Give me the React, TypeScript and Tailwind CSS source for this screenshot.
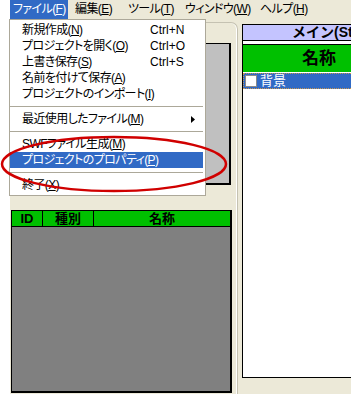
import React from 'react';

type Item =
  | { kind: 'item'; label: string; mn: string; shortcut?: string; sub?: boolean; active?: boolean }
  | { kind: 'sep' };

const fileMenu: Item[] = [
  { kind: 'item', label: '新規作成', mn: 'N', shortcut: 'Ctrl+N' },
  { kind: 'item', label: 'プロジェクトを開く', mn: 'O', shortcut: 'Ctrl+O' },
  { kind: 'item', label: '上書き保存', mn: 'S', shortcut: 'Ctrl+S' },
  { kind: 'item', label: '名前を付けて保存', mn: 'A' },
  { kind: 'item', label: 'プロジェクトのインポート', mn: 'I' },
  { kind: 'sep' },
  { kind: 'item', label: '最近使用したファイル', mn: 'M', sub: true },
  { kind: 'sep' },
  { kind: 'item', label: 'SWFファイル生成', mn: 'M' },
  { kind: 'item', label: 'プロジェクトのプロパティ', mn: 'P', active: true },
  { kind: 'sep' },
  { kind: 'item', label: '終了', mn: 'X' },
];

const Mn = ({ label, mn }: { label: string; mn: string }) => (
  <span className="whitespace-nowrap tracking-[-0.6px]">
    {label}(<span className="underline underline-offset-1">{mn}</span>)
  </span>
);

const menuBar = [
  { label: 'ファイル', mn: 'F', w: 'w-[58px]', open: true },
  { label: '編集', mn: 'E', w: 'w-[53px] ml-[4px]' },
  { label: 'ツール', mn: 'T', w: 'w-[57px]' },
  { label: 'ウィンドウ', mn: 'W', w: 'w-[75px]' },
  { label: 'ヘルプ', mn: 'H', w: 'w-[60px]' },
];

const FileMenu = () => (
  <div className="absolute left-[9px] top-[19px] w-[197px] bg-white border border-[#aca899] pt-[2px] pb-[2px] pr-[2px] z-10">
    {fileMenu.map((it, i) =>
      it.kind === 'sep' ? (
        <div key={i} className="h-[9px] flex items-center">
          <div className="w-full h-px bg-[#aca899]" />
        </div>
      ) : (
        <div
          key={i}
          className={`h-[16px] grid grid-cols-[128px_1fr_12px] items-center pl-[12px] leading-[16px] ${
            it.active ? 'bg-[#316ac5] text-white' : 'text-black'
          }`}
        >
          <Mn label={it.label} mn={it.mn} />
          <span>{it.shortcut ?? ''}</span>
          <span className="flex justify-start">
            {it.sub && (
              <svg width="4" height="7" viewBox="0 0 4 7">
                <path d="M0 0L4 3.5L0 7Z" fill="#000" />
              </svg>
            )}
          </span>
        </div>
      )
    )}
  </div>
);

export default function App() {
  return (
    <div className="relative w-[351px] h-[394px] overflow-hidden flex bg-white font-['Liberation_Sans','Noto_Sans_CJK_JP',sans-serif] text-[12px] [font-feature-settings:'palt']">
      <div className="w-[10px] shrink-0 bg-white" />
      <div className="flex-1 flex flex-col bg-[#ece9d8] min-w-0">
        {/* menu bar */}
        <div className="h-[19px] flex shrink-0">
          {menuBar.map((m) => (
            <div
              key={m.label}
              className={`${m.w} shrink-0 pl-[3px] leading-[19px] ${m.open ? 'bg-[#316ac5] text-white' : 'text-black'}`}
            >
              <Mn label={m.label} mn={m.mn} />
            </div>
          ))}
        </div>

        <div className="flex flex-1 min-h-0">
          {/* left column */}
          <div className="w-[228px] shrink-0 mt-[3px] border-t border-r border-[#c5c2b2] rounded-tr-[7px] shadow-[inset_-1px_0_0_#ffffff] flex flex-col">
            <div className="ml-[1px] mt-[20px] w-[220px] h-[142px] bg-[#c0c0c0] border border-black border-r-2 border-b-2" />
            <div className="ml-[1px] mt-[25px] w-[221px] h-[183px] flex flex-col bg-[#808080] border border-black border-r-2 border-b-2">
              <div className="h-[16px] flex bg-[#00c000] border-b border-black font-bold text-[13px] leading-[15px] text-black">
                <div className="w-[31px] border-r border-black text-center">ID</div>
                <div className="w-[51px] border-r border-black text-center">種別</div>
                <div className="flex-1 text-center">名称</div>
              </div>
            </div>
          </div>

          {/* right panel */}
          <div className="ml-[4px] mt-[5px] w-[154px] h-[354px] shrink-0 bg-white border border-black flex flex-col">
            <div className="h-[16px] bg-[#c4c4ff] border-b border-black font-bold text-[14px] leading-[15px] pl-[49px] whitespace-nowrap [font-feature-settings:normal]">
              メイン(Stage)
            </div>
            <div className="h-[3px]" />
            <div className="h-[28px] bg-[#00c000] border-t border-black flex items-center justify-center font-bold text-[17px] text-black">
              名称
            </div>
            <div className="mt-px h-[16px] bg-[#316ac5] border border-dotted border-[#c89650] flex items-center gap-[3px] pl-[1px] text-white text-[13px]">
              <span className="w-[12px] h-[12px] bg-white border border-[#8a8a8a]" />
              <span>背景</span>
            </div>
          </div>
        </div>
      </div>

      <FileMenu />

      {/* annotation */}
      <svg className="absolute left-0 top-0 pointer-events-none z-20" width="351" height="394">
        <ellipse cx="114" cy="164" rx="112" ry="27" fill="none" stroke="#d00000" strokeWidth="2.5" />
      </svg>
    </div>
  );
}
